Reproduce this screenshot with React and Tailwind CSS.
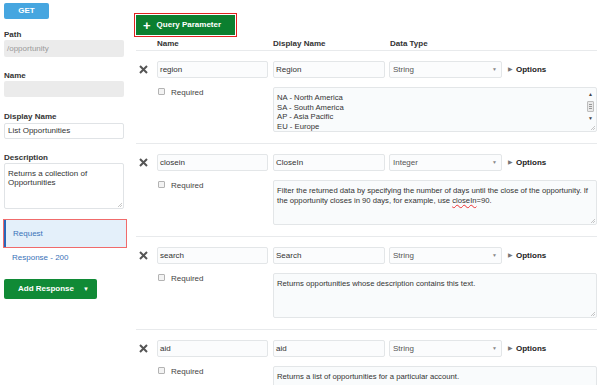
// Query parameter editor — request panel of a REST endpoint designer.

const params = [
  {
    name: "region",
    display: "Region",
    type: "String",
    lines: ["NA - North America", "SA - South America", "AP - Asia Pacific", "EU - Europe"],
    scroll: true,
  },
  {
    name: "closein",
    display: "CloseIn",
    type: "Integer",
    lines: [
      "Filter the returned data by specifying the number of days until the close of the opportunity. If",
      "the opportunity closes in 90 days, for example, use ",
    ],
    spell: true,
  },
  {
    name: "search",
    display: "Search",
    type: "String",
    lines: ["Returns opportunities whose description contains this text."],
  },
  {
    name: "aid",
    display: "aid",
    type: "String",
    lines: ["Returns a list of opportunities for a particular account."],
  },
];

function Grip() {
  return (
    <svg className="absolute right-[1px] bottom-[1px]" width="5" height="5" viewBox="0 0 5 5">
      <path d="M1 5 L5 1 M3 5 L5 3" stroke="#b9b9b9" strokeWidth="0.8" />
    </svg>
  );
}

function XIcon() {
  return (
    <svg width="9" height="9" viewBox="0 0 9 9">
      <path d="M1 1 L8 8 M8 1 L1 8" stroke="#555" strokeWidth="2" />
    </svg>
  );
}

function Scrollbar() {
  return (
    <div className="w-[9px] flex flex-col items-center pt-[3px] mr-[1px]">
      <span className="text-[5px] leading-[6px] text-[#444]">▲</span>
      <div className="mt-[4px] w-[7px] h-[11px] bg-[#e9e9e9] border border-[#bdbdbd] rounded-[1px] flex flex-col items-center justify-center gap-[1px]">
        <div className="w-[3px] h-[1px] bg-[#999]" />
        <div className="w-[3px] h-[1px] bg-[#999]" />
        <div className="w-[3px] h-[1px] bg-[#999]" />
      </div>
      <span className="mt-[3px] text-[5px] leading-[6px] text-[#444]">▼</span>
    </div>
  );
}

function ParamRow({ p }) {
  return (
    <div className="shrink-0 border-b border-[#e8eaec] pt-[10px] pb-[11px]">
      <div className="flex h-[17px] items-center">
        <div className="w-[21px] pl-[3px] flex items-center">
          <XIcon />
        </div>
        <div className="w-[111px] h-[17px] border border-[#e3e6e8] bg-[#fbfcfd] rounded-[2px] pl-[2px] flex items-center text-[8px] text-[#333]">
          {p.name}
        </div>
        <div className="ml-[5px] w-[112px] h-[17px] border border-[#e3e6e8] bg-[#fbfcfd] rounded-[2px] pl-[2px] flex items-center text-[8px] text-[#333]">
          {p.display}
        </div>
        <div className="ml-[4px] w-[113px] h-[17px] border border-[#e3e6e8] bg-[#fbfcfd] rounded-[2px] pl-[3px] pr-[4px] flex items-center justify-between text-[8px] text-[#555]">
          <span>{p.type}</span>
          <span className="text-[5px] text-[#888]">▼</span>
        </div>
        <div className="ml-[6px] flex items-center gap-[3px]">
          <span className="text-[6px] text-[#777]">▶</span>
          <span className="text-[8px] font-bold text-[#222]">Options</span>
        </div>
      </div>
      <div className="flex mt-[9px]">
        <div className="w-[21px]" />
        <div className="w-[116px] flex items-start">
          <div className="mt-[1px] ml-[1px] w-[7px] h-[7px] border border-[#b3b3b3] bg-[#f3f3f3] rounded-[1px]" />
          <span className="ml-[6px] mt-[1px] text-[8px] leading-[10px] text-[#444]">Required</span>
        </div>
        <div className="relative w-[324px] h-[45px] border border-[#e3e6e8] bg-[#f9fbfc] rounded-[2px] flex">
          <div className="flex-1 pl-[3px] pt-[5px] text-[7.7px] leading-[9.5px] text-[#333]">
            {p.lines.map((l, i) => (
              <div key={i} className="whitespace-nowrap">
                {l}
                {p.spell && i === p.lines.length - 1 && (
                  <>
                    <span className="underline decoration-wavy decoration-[#e33] decoration-[0.7px]">closeIn</span>
                    =90.
                  </>
                )}
              </div>
            ))}
          </div>
          {p.scroll && <Scrollbar />}
          <Grip />
        </div>
      </div>
    </div>
  );
}

export default function App() {
  return (
    <div className="w-[600px] h-[385px] overflow-hidden bg-white flex items-start font-['Liberation_Sans',Arial,sans-serif]">
      {/* ── Sidebar ─────────────────────────────────────────────── */}
      <div className="w-[134px] shrink-0 pl-[4px] pt-[3px] flex flex-col">
        <div className="w-[45px] h-[16px] bg-[#46a6e0] rounded-[2px] flex items-center justify-center text-white text-[8px] font-bold">
          GET
        </div>

        <p className="mt-[11px] text-[8px] leading-[10px] font-bold text-[#333]">Path</p>
        <div className="w-[120px] h-[17px] bg-[#ebebeb] rounded-[2px] pl-[3px] flex items-center text-[8px] text-[#9a9a9a]">
          /opportunity
        </div>

        <p className="mt-[14px] text-[8px] leading-[10px] font-bold text-[#333]">Name</p>
        <div className="w-[120px] h-[16px] bg-[#ebebeb] rounded-[2px]" />

        <p className="mt-[15px] text-[8px] leading-[10px] font-bold text-[#333]">Display Name</p>
        <div className="mt-[1px] w-[120px] h-[16px] border border-[#e0e3e6] bg-white rounded-[2px] pl-[3px] flex items-center text-[8px] text-[#333]">
          List Opportunities
        </div>

        <p className="mt-[14px] text-[8px] leading-[10px] font-bold text-[#333]">Description</p>
        <div className="relative w-[120px] h-[46px] border border-[#e0e3e6] bg-white rounded-[2px] pl-[3px] pt-[5px] text-[8px] leading-[9px] text-[#333]">
          Returns a collection of
          <br />
          Opportunities
          <Grip />
        </div>

        <div className="mt-[10px] -ml-[1px] w-[124px] h-[29px] border border-[#f06b6b] p-0">
          <div className="h-full bg-[#e4f0fa] border-l-2 border-[#2a66b8] pl-[7px] flex items-center text-[8px] text-[#3a72b8]">
            Request
          </div>
        </div>
        <p className="mt-[5px] pl-[8px] text-[8px] leading-[10px] text-[#3a72b8]">Response - 200</p>

        <div className="mt-[16px] w-[93px] h-[20px] bg-[#108a36] rounded-[2px] flex items-center pl-[14px] pr-[8px] justify-between text-white">
          <span className="text-[8px] font-bold">Add Response</span>
          <span className="text-[6px]">▼</span>
        </div>
      </div>

      {/* ── Query parameters ───────────────────────────────────── */}
      <div className="w-[461px] shrink-0 pt-[13px] flex flex-col ml-[2px]">
        <div className="shrink-0 -ml-[2px] w-[103px] h-[24px] border border-[#e02020] p-[1px]">
          <div className="h-full bg-[#0b7f2f] flex items-center pl-[7px] gap-[6px] text-white">
            <span className="text-[13px] font-bold leading-none">+</span>
            <span className="text-[8px] font-bold">Query Parameter</span>
          </div>
        </div>

        <div className="shrink-0 h-[14px] flex items-center border-b border-[#e8eaec] text-[8px] font-bold text-[#333]">
          <span className="ml-[21px] w-[116px]">Name</span>
          <span className="w-[117px]">Display Name</span>
          <span>Data Type</span>
        </div>

        {params.map((p) => (
          <ParamRow key={p.name} p={p} />
        ))}
      </div>
    </div>
  );
}
